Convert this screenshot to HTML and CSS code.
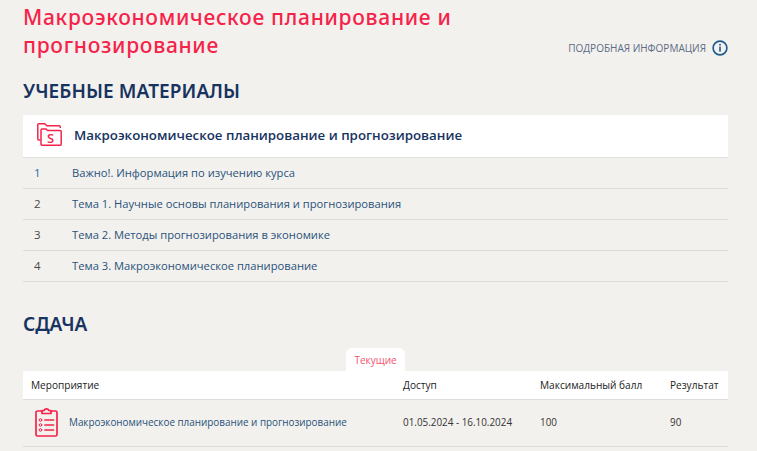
FILE: index.html
```html
<!DOCTYPE html>
<html lang="ru">
<head>
<meta charset="utf-8">
<title>Курс</title>
<link rel="stylesheet" href="styles.css">
</head>
<body>
<main class="page">
  <header class="course-head">
    <h1 class="course-title">Макроэкономическое планирование и прогнозирование</h1>
    <a class="more-link">ПОДРОБНАЯ ИНФОРМАЦИЯ
      <svg class="info-icon" viewBox="0 0 16 16" width="16" height="16"><circle cx="8" cy="8" r="6.900" fill="none" stroke="#1a5a8e" stroke-width="1.600"/><rect x="7.200" y="6.600" width="1.600" height="5" fill="#1a5a8e"/><rect x="7.200" y="3.900" width="1.600" height="1.600" fill="#1a5a8e"/></svg>
    </a>
  </header>

  <h2 class="section-title materials-title">УЧЕБНЫЕ МАТЕРИАЛЫ</h2>
  <section class="materials">
    <div class="materials-head">
      <svg class="folder-icon" viewBox="0 0 25 23" width="25" height="23" fill="none" stroke="#f5234a" stroke-width="1.500" stroke-linejoin="round"><path d="M3.500 17H1.800a1 1 0 0 1-1-1V1.800a1 1 0 0 1 1-1h6l2 2h12a1.500 1.500 0 0 1 1.500 1.500V5"/><path d="M4 7a1 1 0 0 1 1-1h4l1.500 1.500H23.200a1 1 0 0 1 1 1V21.200a1 1 0 0 1-1 1H5a1 1 0 0 1-1-1z"/></svg>
      <span class="folder-s">S</span>
      <span class="materials-name">Макроэкономическое планирование и прогнозирование</span>
    </div>
    <ol class="topics">
      <li class="topic"><span class="topic-num">1</span><span class="topic-text">Важно!. Информация по изучению курса</span></li>
      <li class="topic"><span class="topic-num">2</span><span class="topic-text">Тема 1. Научные основы планирования и прогнозирования</span></li>
      <li class="topic"><span class="topic-num">3</span><span class="topic-text">Тема 2. Методы прогнозирования в экономике</span></li>
      <li class="topic"><span class="topic-num">4</span><span class="topic-text">Тема 3. Макроэкономическое планирование</span></li>
    </ol>
  </section>

  <h2 class="section-title exam-title">СДАЧА</h2>
  <div class="tabs"><span class="tab">Текущие</span></div>
  <section class="exam">
    <div class="row row-head">
      <span class="c-name">Мероприятие</span>
      <span class="c-access">Доступ</span>
      <span class="c-max">Максимальный балл</span>
      <span class="c-res">Результат</span>
    </div>
    <div class="row row-body">
      <span class="c-name name-cell">
        <svg class="clip-icon" viewBox="0 0 23 30" width="23" height="30" fill="none" stroke="#f5234a" stroke-width="1.700" stroke-linejoin="round" stroke-linecap="round"><path d="M7 4H2.500A1.500 1.500 0 0 0 1 5.500v22A1.500 1.500 0 0 0 2.500 29h18a1.500 1.500 0 0 0 1.500-1.500v-22A1.500 1.500 0 0 0 20.500 4H16"/><path d="M7 6.500V3.500h2.200a2.400 2.400 0 0 1 4.600 0H16v3z"/><circle cx="5.500" cy="13" r="1.300" stroke-width="1"/><circle cx="5.500" cy="18" r="1.300" stroke-width="1"/><circle cx="5.500" cy="23" r="1.300" stroke-width="1"/><path d="M10 13h8.500M10 18h8.500M10 23h8.500"/></svg>
        <span class="event-name">Макроэкономическое планирование и прогнозирование</span>
      </span>
      <span class="c-access">01.05.2024 - 16.10.2024</span>
      <span class="c-max">100</span>
      <span class="c-res">90</span>
    </div>
  </section>
</main>
</body>
</html>
```
FILE: styles.css
```css
* { box-sizing: border-box; }
html, body { margin: 0; height: 451px; overflow: hidden; }
body { background: #f3f1ee; font-family: "Open Sans", "Noto Sans", sans-serif; color: #333; }
.page { padding: 0 29px 0 23px; }
.course-head { display: flex; justify-content: space-between; align-items: flex-end; height: 67px; }
.course-title { align-self: flex-start; margin: 3px 0 0; width: 450px; font-family: "Noto Sans", sans-serif; font-size: 21px; line-height: 28px; font-weight: 500; letter-spacing: 0.700px; color: #f5234a; }
.more-link { display: flex; align-items: center; gap: 6px; font-size: 10px; color: #5c6c85; height: 16px; margin-bottom: 11px; white-space: nowrap; }
.section-title { margin: 0; font-family: "Noto Sans", sans-serif; font-size: 19px; line-height: 26px; font-weight: 600; color: #17335f; }
.materials-title { margin-top: 11px; letter-spacing: 0.1px; }
.materials { margin-top: 11px; }
.materials-head { position: relative; display: flex; align-items: center; gap: 12px; height: 43px; padding-left: 14px; padding-bottom: 3px; background: #fff; border-bottom: 1px solid #e2e0dd; }
.folder-s { position: absolute; left: 24px; top: 15px; font-size: 13px; line-height: 17px; font-weight: 600; color: #f5234a; }
.materials-name { font-size: 13.300px; font-weight: 600; color: #17335f; }
.topics { margin: 0; padding: 0; list-style: none; }
.topic { display: flex; align-items: center; height: 31px; padding-bottom: 1px; border-bottom: 1px solid #dfddda; font-size: 11.200px; color: #28527a; }
.topic-num { width: 49px; padding-left: 11px; font-size: 11.500px; color: #1a6aa8; }
.topic:nth-child(n+2) .topic-num { color: #4a4a3c; }
.section-title.exam-title { margin-top: 29px; }
.tabs { display: flex; justify-content: center; margin-top: 11px; height: 23px; }
.tab { display: flex; align-items: center; padding: 0 8px; background: #fff; border-radius: 6px 6px 0 0; font-size: 10px; color: #f5506e; }
.row { display: flex; align-items: center; color: #222; }
.row-head { height: 29px; background: #fff; border-bottom: 1px solid #dfddda; font-size: 10.100px; }
.row-body { height: 47px; padding-bottom: 2px; border-bottom: 1px solid #dfddda; color: #333; font-size: 9.900px; }
.c-name { width: 380px; padding-left: 8px; flex: none; }
.c-access { width: 137px; flex: none; }
.c-max { width: 130px; flex: none; }
.c-res { flex: none; }
.name-cell { display: flex; align-items: center; gap: 11px; padding-left: 12px; }
.event-name { color: #28527a; }
```
